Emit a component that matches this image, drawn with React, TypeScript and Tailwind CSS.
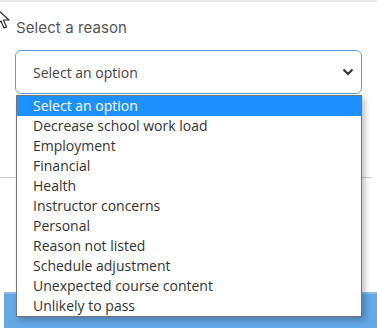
import { useState } from 'react';

const reasons = [
  'Select an option',
  'Decrease school work load',
  'Employment',
  'Financial',
  'Health',
  'Instructor concerns',
  'Personal',
  'Reason not listed',
  'Schedule adjustment',
  'Unexpected course content',
  'Unlikely to pass',
];

function Cursor() {
  return (
    <svg className="absolute -left-[4px] top-[8px]" width="14" height="24" viewBox="0 0 14 24">
      <path d="M1 1 L1 17 L5 13 L8 20 L10.5 19 L7.5 12 L13 12 Z" fill="#fff" stroke="#222" strokeWidth="1.1" strokeLinejoin="round" />
    </svg>
  );
}

export default function App() {
  const [selected] = useState(0);

  return (
    <main className="relative w-[377px] h-[328px] overflow-hidden bg-white font-['Open_Sans',sans-serif]">
      <div className="h-[2px] bg-[#ececec]" />
      <Cursor />
      <div className="pl-4 pr-[15px] pt-[16px]">
        <label className="block text-[15px] leading-[20px] text-[#555] font-['Inter',sans-serif] tracking-[0.1px]">
          Select a reason
        </label>
        <div className="mt-[12px] -ml-px flex h-[44px] items-center justify-between rounded-[6px] border border-[#5a9fe6] pl-[17px] pr-[7px] text-[14px] text-[#444]">
          <span>Select an option</span>
          <svg width="12" height="8" viewBox="0 0 12 8">
            <path d="M1.5 1.5 L6 6 L10.5 1.5" fill="none" stroke="#333" strokeWidth="2.2" />
          </svg>
        </div>
      </div>
      <div className="mt-[83px] h-px w-[372px] bg-[#d0d0d0]" />
      <div className="mt-[114px] ml-[4px] h-[40px] border-t-2 border-[#8cbdec] bg-[#64a8e6]" />

      <ul className="absolute left-[16px] top-[95px] w-[346px] border border-[#767676] bg-white shadow-[3px_3px_6px_rgba(0,0,0,0.25)]">
        {reasons.map((r, i) => (
          <li
            key={r}
            className={
              i === selected
                ? 'h-[20px] pl-4 text-[14px] leading-[20px] bg-[#1e90ff] text-white'
                : 'h-[20px] pl-4 text-[14px] leading-[20px] text-[#333]'
            }
          >
            {r}
          </li>
        ))}
      </ul>
    </main>
  );
}
